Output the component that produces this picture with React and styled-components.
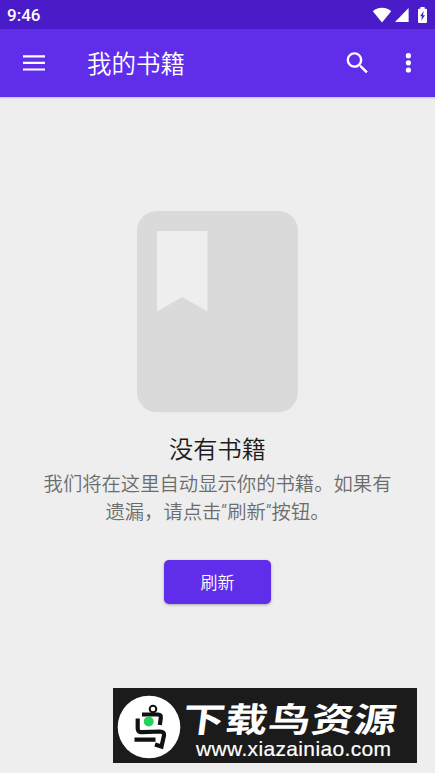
import React from "react";
import styled, {createGlobalStyle} from "styled-components";

const App = () => {
    return (
        <Screen>
            <GlobalStyle/>
            <StatusBar>
                <Clock>9:46</Clock>
                <StatusIcons>
                    <svg width="20" height="16" viewBox="0 0 20 16" fill="#fff">
                        <path d="M0.8 4.2C3 2 6.2 .8 10 .8s7 1.2 9.2 3.4L10 15.5z"/>
                    </svg>
                    <svg width="14" height="15" viewBox="0 0 14 15" fill="#fff">
                        <path d="M0 15L13.6 1v14z"/>
                    </svg>
                    <Battery width="9" height="16" viewBox="0 0 9 16">
                        <path fill="#fff" d="M2.4 0h4.2v1.8H8q1 0 1 1V15q0 1-1 1H1q-1 0-1-1V2.8q0-1 1-1h1.4z"/>
                        <path fill="#4a1bc8" d="M5.7 4L2 9.3h2L3.3 13.5 7 8.2H5z"/>
                    </Battery>
                </StatusIcons>
            </StatusBar>
            <AppBar>
                <IconButton $width={68} aria-label="menu">
                    <svg width="22" height="16" viewBox="0 0 22 16" fill="#fff">
                        <path d="M0 .3h22v2.2H0zM0 6.8h22v2.2H0zM0 13.4h22v2.2H0z"/>
                    </svg>
                </IconButton>
                <Title>我的书籍</Title>
                <IconButton $width={50} aria-label="search">
                    <svg width="29" height="29" viewBox="0 0.4 24 24" fill="#fff">
                        <path d="M15.5 14h-.79l-.28-.27A6.471 6.471 0 0 0 16 9.5 6.5 6.5 0 1 0 9.5 16c1.61 0 3.09-.59 4.23-1.57l.27.28v.79l5 4.99L20.49 19l-4.99-5zm-6 0C7.01 14 5 11.99 5 9.5S7.01 5 9.5 5 14 7.01 14 9.5 11.99 14 9.5 14z"/>
                    </svg>
                </IconButton>
                <IconButton $width={53} aria-label="more">
                    <svg width="7" height="20" viewBox="0 0 7 20" fill="#fff">
                        <circle cx="3.4" cy="2.7" r="2.6"/>
                        <circle cx="3.4" cy="9.8" r="2.6"/>
                        <circle cx="3.4" cy="17" r="2.6"/>
                    </svg>
                </IconButton>
            </AppBar>
            <EmptyState>
                <svg width="161" height="202" viewBox="0 0 161 202">
                    <rect width="161" height="201.3" rx="20" fill="#dadada"/>
                    <path d="M20 20h50.5v80.5L45.2 86 20 100.5z" fill="#eeeeee"/>
                </svg>
                <EmptyTitle>没有书籍</EmptyTitle>
                <EmptyText>我们将在这里自动显示你的书籍。如果有遗漏，请点击“刷新”按钮。</EmptyText>
                <RefreshButton>刷新</RefreshButton>
            </EmptyState>
            <Banner>
                <svg width="64" height="64" viewBox="0 0 64 64">
                    <circle cx="32" cy="32" r="31.3" fill="#fff"/>
                    <g fill="none" stroke="#111">
                        <circle cx="36" cy="14" r="3.3" strokeWidth="2"/>
                        <path strokeWidth="4.2" d="M25 19.5H41Q44.3 19.5 43.8 23L42.8 30M20.7 23.5V33.5Q20.7 37.5 25 37.2L43 36.5Q47.5 36.5 47 40.5L44.5 51.5L38 49.5M17.5 44.6H38.5"/>
                    </g>
                    <circle cx="31.7" cy="26.5" r="5" fill="#22d35c"/>
                </svg>
                <BannerText>
                    <BannerName>下载鸟资源</BannerName>
                    <BannerUrl>www.xiazainiao.com</BannerUrl>
                </BannerText>
            </Banner>
        </Screen>
    );
};

const GlobalStyle = createGlobalStyle`
  * {
    box-sizing: border-box;
  }

  body {
    margin: 0;
    background-color: #eeeeee;
    font-family: Roboto, "Noto Sans CJK SC", sans-serif;
  }
`
const Screen = styled.div`
  width: 100%;
  height: 773px;
  display: flex;
  flex-direction: column;
  overflow: hidden;
  background-color: #eeeeee;
`
const StatusBar = styled.div`
  height: 29px;
  flex-shrink: 0;
  display: flex;
  align-items: center;
  justify-content: space-between;
  padding: 0 8px 0 7px;
  background-color: #4a1bc8;
`
const Clock = styled.span`
  color: #ffffff;
  font-size: 17px;
  font-weight: 500;
  line-height: 29px;
  padding-top: 1px;
`
const StatusIcons = styled.div`
  display: flex;
  align-items: center;
  gap: 3px;
`
const Battery = styled.svg`
  margin-left: 6px;
`
const AppBar = styled.header`
  height: 68px;
  flex-shrink: 0;
  display: flex;
  align-items: center;
  background-color: #602deb;
  box-shadow: 0 1px 2px rgba(0, 0, 0, 0.2);
`
const IconButton = styled.button`
  width: ${({$width}) => $width}px;
  height: 68px;
  display: flex;
  align-items: center;
  justify-content: center;
  padding: 0;
  border: none;
  background: none;
  cursor: pointer;
`
const Title = styled.h1`
  flex: 1;
  margin: 0;
  padding: 0 0 1px 19px;
  color: #ffffff;
  font-family: "Noto Sans CJK SC", sans-serif;
  font-size: 24.5px;
  font-weight: 350;
  line-height: 66px;
`
const EmptyState = styled.main`
  flex: 1;
  display: flex;
  flex-direction: column;
  align-items: center;
  padding-top: 114px;

  svg {
    flex-shrink: 0;
  }
`
const EmptyTitle = styled.h2`
  margin: 19px 0 0;
  color: #1c1c1c;
  font-size: 24.2px;
  font-weight: 350;
  line-height: 36px;
`
const EmptyText = styled.p`
  width: 352px;
  margin: 3px 0 0;
  color: #6c6c6c;
  font-size: 19.33px;
  font-weight: 350;
  line-height: 28px;
  text-align: center;
`
const RefreshButton = styled.button`
  width: 107px;
  height: 44px;
  flex-shrink: 0;
  margin-top: 33px;
  padding: 0 0 2px;
  border: none;
  border-radius: 5px;
  background-color: #602deb;
  box-shadow: 0 1px 3px rgba(0, 0, 0, 0.3);
  color: #ffffff;
  font-family: inherit;
  font-size: 17px;
  font-weight: 350;
  cursor: pointer;
`
const Banner = styled.footer`
  width: 304px;
  height: 75px;
  flex-shrink: 0;
  align-self: flex-end;
  display: flex;
  align-items: center;
  gap: 2px;
  margin: 0 18px 10px 0;
  padding: 2px 0 0 4px;
  background-color: #1b1b1b;
  color: #ffffff;
`
const BannerText = styled.div`
  display: flex;
  flex-direction: column;
  padding-top: 8px;
  white-space: nowrap;
`
const BannerName = styled.span`
  width: 175px;
  font-family: "Noto Sans CJK SC", sans-serif;
  font-size: 34px;
  font-weight: 700;
  line-height: 36px;
  letter-spacing: 0.6px;
  transform: scaleX(1.24) skewX(-6deg);
  transform-origin: left center;
`
const BannerUrl = styled.span`
  padding-left: 13px;
  font-family: "Liberation Sans", Arial, sans-serif;
  font-size: 21px;
  line-height: 25px;
  letter-spacing: 0.35px;
  -webkit-text-stroke: 0.2px #ffffff;
`

export default App;
